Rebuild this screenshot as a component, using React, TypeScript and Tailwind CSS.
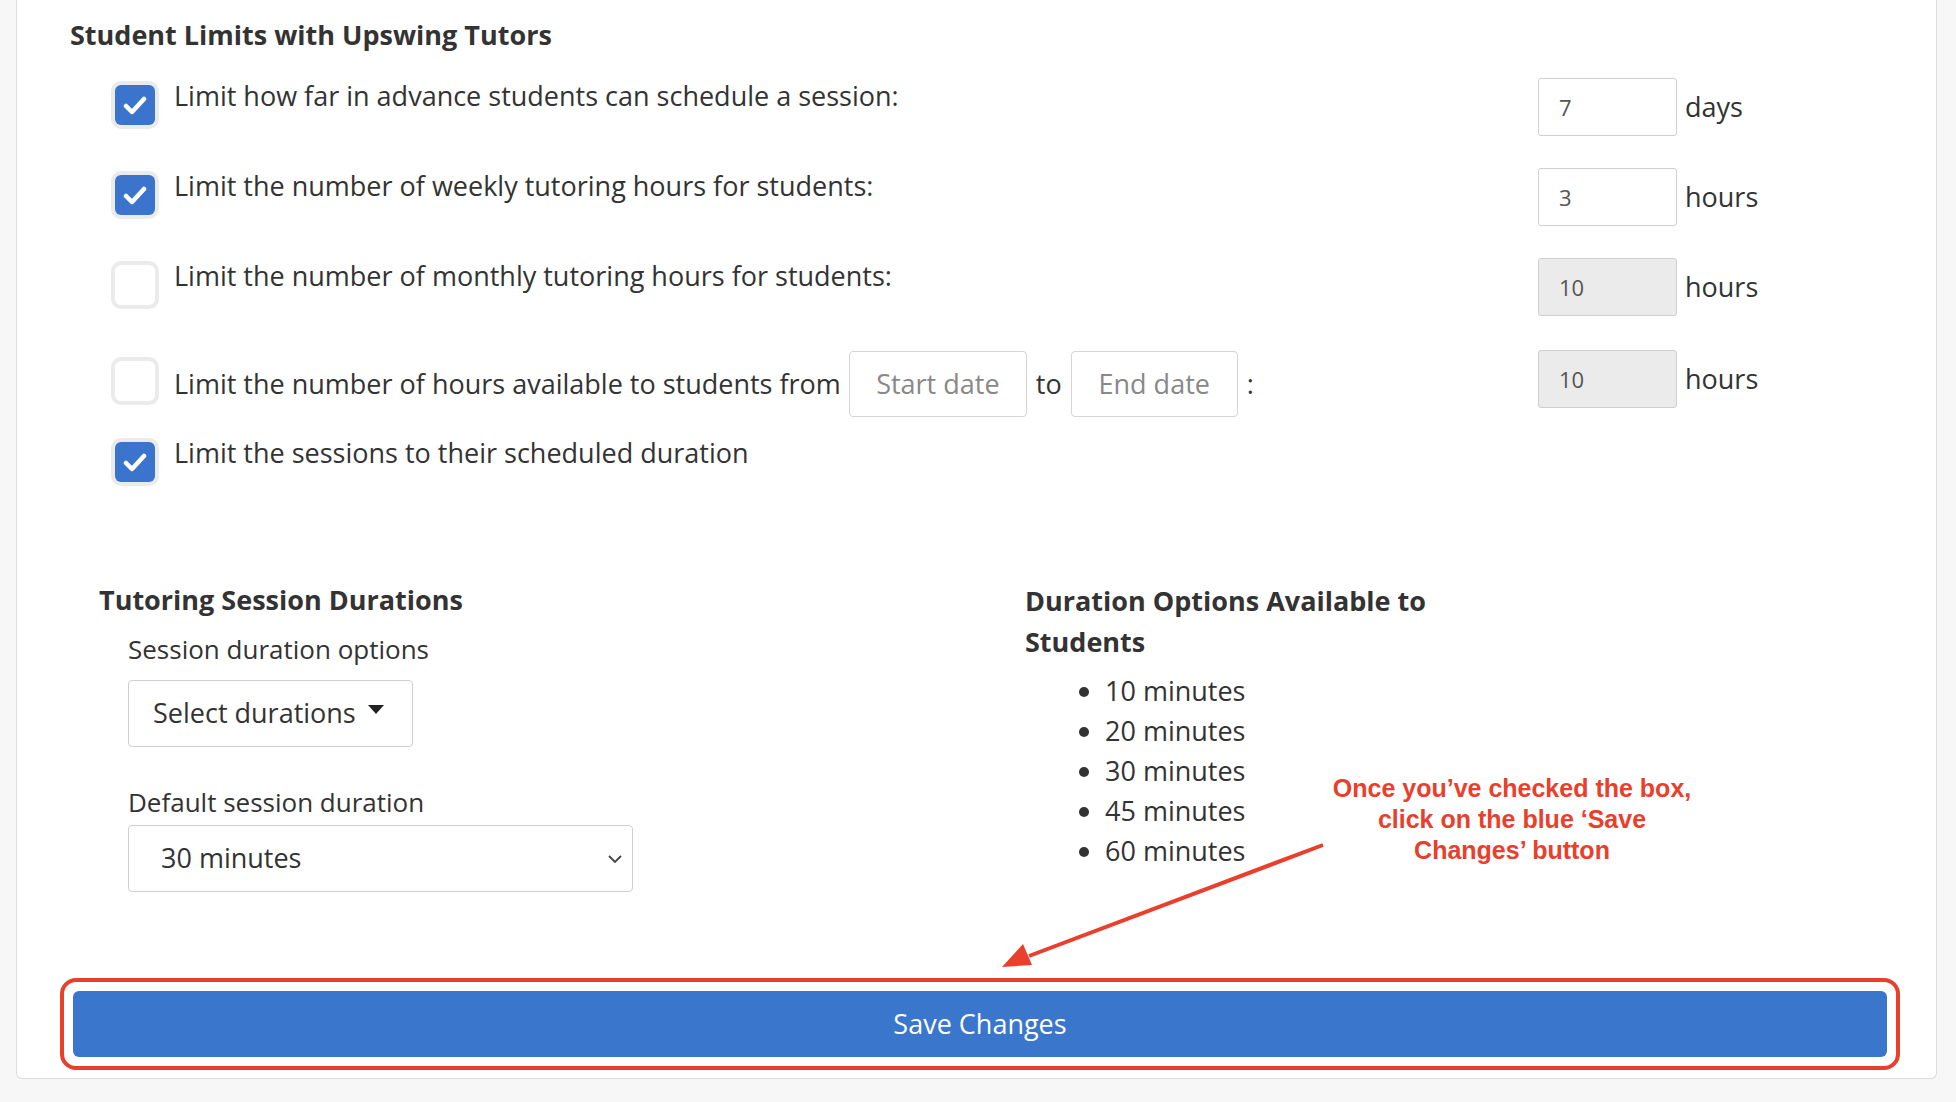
import React from "react";

const font = { fontFamily: '"Open Sans", "Noto Sans", sans-serif' };

function Check({ on }: { on: boolean }) {
  return (
    <div className="w-[48px] h-[48px] rounded-[10px] bg-[#ebebeb] flex items-center justify-center shrink-0">
      <div className={`w-[40px] h-[40px] rounded-[6px] flex items-center justify-center ${on ? "bg-[#3a74cc]" : "bg-white"}`}>
        {on && (
          <svg width="24" height="20" viewBox="0 0 24 20">
            <path d="M3 11 L9 17 L21 4" stroke="white" strokeWidth="4.5" fill="none" strokeLinecap="round" strokeLinejoin="round" />
          </svg>
        )}
      </div>
    </div>
  );
}

function NumBox({ value, disabled, unit }: { value: string; disabled?: boolean; unit: string }) {
  return (
    <div className="flex items-center gap-[8px] w-[230px]">
      <div className={`w-[139px] h-[58px] border border-[#cfcfcf] rounded-[3px] flex items-center pl-[20px] text-[22px] text-[#555] ${disabled ? "bg-[#ebebeb]" : "bg-white"}`}>{value}</div>
      <span className="text-[27px] text-[#333]">{unit}</span>
    </div>
  );
}

export default function App() {
  const rows = [
    { on: true, text: "Limit how far in advance students can schedule a session:", v: "7", u: "days" },
    { on: true, text: "Limit the number of weekly tutoring hours for students:", v: "3", u: "hours" },
    { on: false, text: "Limit the number of monthly tutoring hours for students:", v: "10", u: "hours", d: true },
  ];
  return (
    <div className="w-[1956px] h-[1102px] bg-[#f7f7f7] overflow-hidden relative" style={font}>
      <div className="ml-[16px] w-[1921px] h-[1079px] bg-white border-x border-b border-[#dcdcdc] rounded-b-[6px] pt-[16px] relative">
        <h2 className="ml-[53px] text-[27px] font-bold text-[#333] leading-[38px]">Student Limits with Upswing Tutors</h2>
        <div className="ml-[94px] mr-[168px] mt-[27px] flex flex-col">
          {rows.map((r, i) => (
            <div key={i} className="h-[90px] flex items-start">
              <Check on={r.on} />
              <span className="ml-[15px] text-[27px] text-[#333] leading-[38px] mt-[-4px] flex-1">{r.text}</span>
              <div className="-mt-[3px]"><NumBox value={r.v} unit={r.u} disabled={r.d} /></div>
            </div>
          ))}
          <div className="h-[90px] flex items-start">
            <div className="mt-[6px]"><Check on={false} /></div>
            <div className="flex items-center flex-1 -mt-[0px]">
              <span className="ml-[15px] text-[27px] text-[#333]">Limit the number of hours available to students from</span>
              <div className="ml-[8px] w-[178px] h-[66px] border border-[#d5d5d5] rounded-[4px] flex items-center justify-center text-[27px] text-[#888]">Start date</div>
              <span className="mx-[9px] text-[27px] text-[#333]">to</span>
              <div className="w-[167px] h-[66px] border border-[#d5d5d5] rounded-[4px] flex items-center justify-center text-[27px] text-[#888]">End date</div>
              <span className="ml-[9px] text-[27px] text-[#333]">:</span>
            </div>
            <div className="-mt-[1px]"><NumBox value="10" unit="hours" disabled /></div>
          </div>
          <div className="h-[60px] flex items-start -mt-[3px]">
            <Check on />
            <span className="ml-[15px] text-[27px] text-[#333] leading-[38px] mt-[-4px]">Limit the sessions to their scheduled duration</span>
          </div>
        </div>

        <div className="flex mt-[82px]">
          <div className="ml-[82px] w-[910px]">
            <h3 className="text-[27px] font-bold text-[#333] leading-[40px]">Tutoring Session Durations</h3>
            <div className="ml-[29px]">
              <div className="text-[26px] text-[#333] mt-[10px] leading-[38px]">Session duration options</div>
              <div className="mt-[12px] w-[285px] h-[67px] border border-[#cfcfcf] rounded-[4px] flex items-center pl-[24px] text-[27px] text-[#333]">
                Select durations
                <svg className="ml-[12px] mb-[8px]" width="16" height="10" viewBox="0 0 16 10"><path d="M0 0 L16 0 L8 9 Z" fill="#222" /></svg>
              </div>
              <div className="text-[26px] text-[#333] mt-[36px] leading-[38px]">Default session duration</div>
              <div className="mt-[4px] w-[505px] h-[67px] border border-[#cfcfcf] rounded-[4px] flex items-center justify-between pl-[32px] pr-[8px] text-[27px] text-[#333]">
                30 minutes
                <svg width="18" height="12" viewBox="0 0 18 12"><path d="M3 3 L9 9 L15 3" stroke="#444" strokeWidth="1.8" fill="none" /></svg>
              </div>
            </div>
          </div>
          <div className="ml-[16px] w-[440px]">
            <h3 className="text-[27px] font-bold text-[#333] leading-[41px]">Duration Options Available to Students</h3>
            <ul className="mt-[9px] ml-[80px] list-disc text-[27px] text-[#333] leading-[40px]">
              {["10", "20", "30", "45", "60"].map((m) => (
                <li key={m}>{m} minutes</li>
              ))}
            </ul>
          </div>
        </div>

        <div className="absolute left-[1305px] top-[773px] w-[380px] text-center text-[25px] leading-[31px] font-bold text-[#e8402c]" style={{ fontFamily: '"Liberation Sans", Arial, sans-serif' }}>
          Once you’ve checked the box, click on the blue ‘Save Changes’ button
        </div>
        <svg className="absolute left-0 top-0 pointer-events-none" width="1921" height="1079">
          <line x1="1306" y1="845" x2="1012" y2="956" stroke="#e8402c" strokeWidth="4" />
          <path d="M985 967 L1006 944 L1015 965 Z" fill="#e8402c" />
        </svg>

        <div className="absolute left-[43px] top-[978px] w-[1840px] h-[92px] border-[4px] border-[#e8402c] rounded-[16px] p-[9px]">
          <div className="w-full h-full bg-[#3a76cc] rounded-[6px] flex items-center justify-center text-white text-[27px]">Save Changes</div>
        </div>
      </div>
    </div>
  );
}
